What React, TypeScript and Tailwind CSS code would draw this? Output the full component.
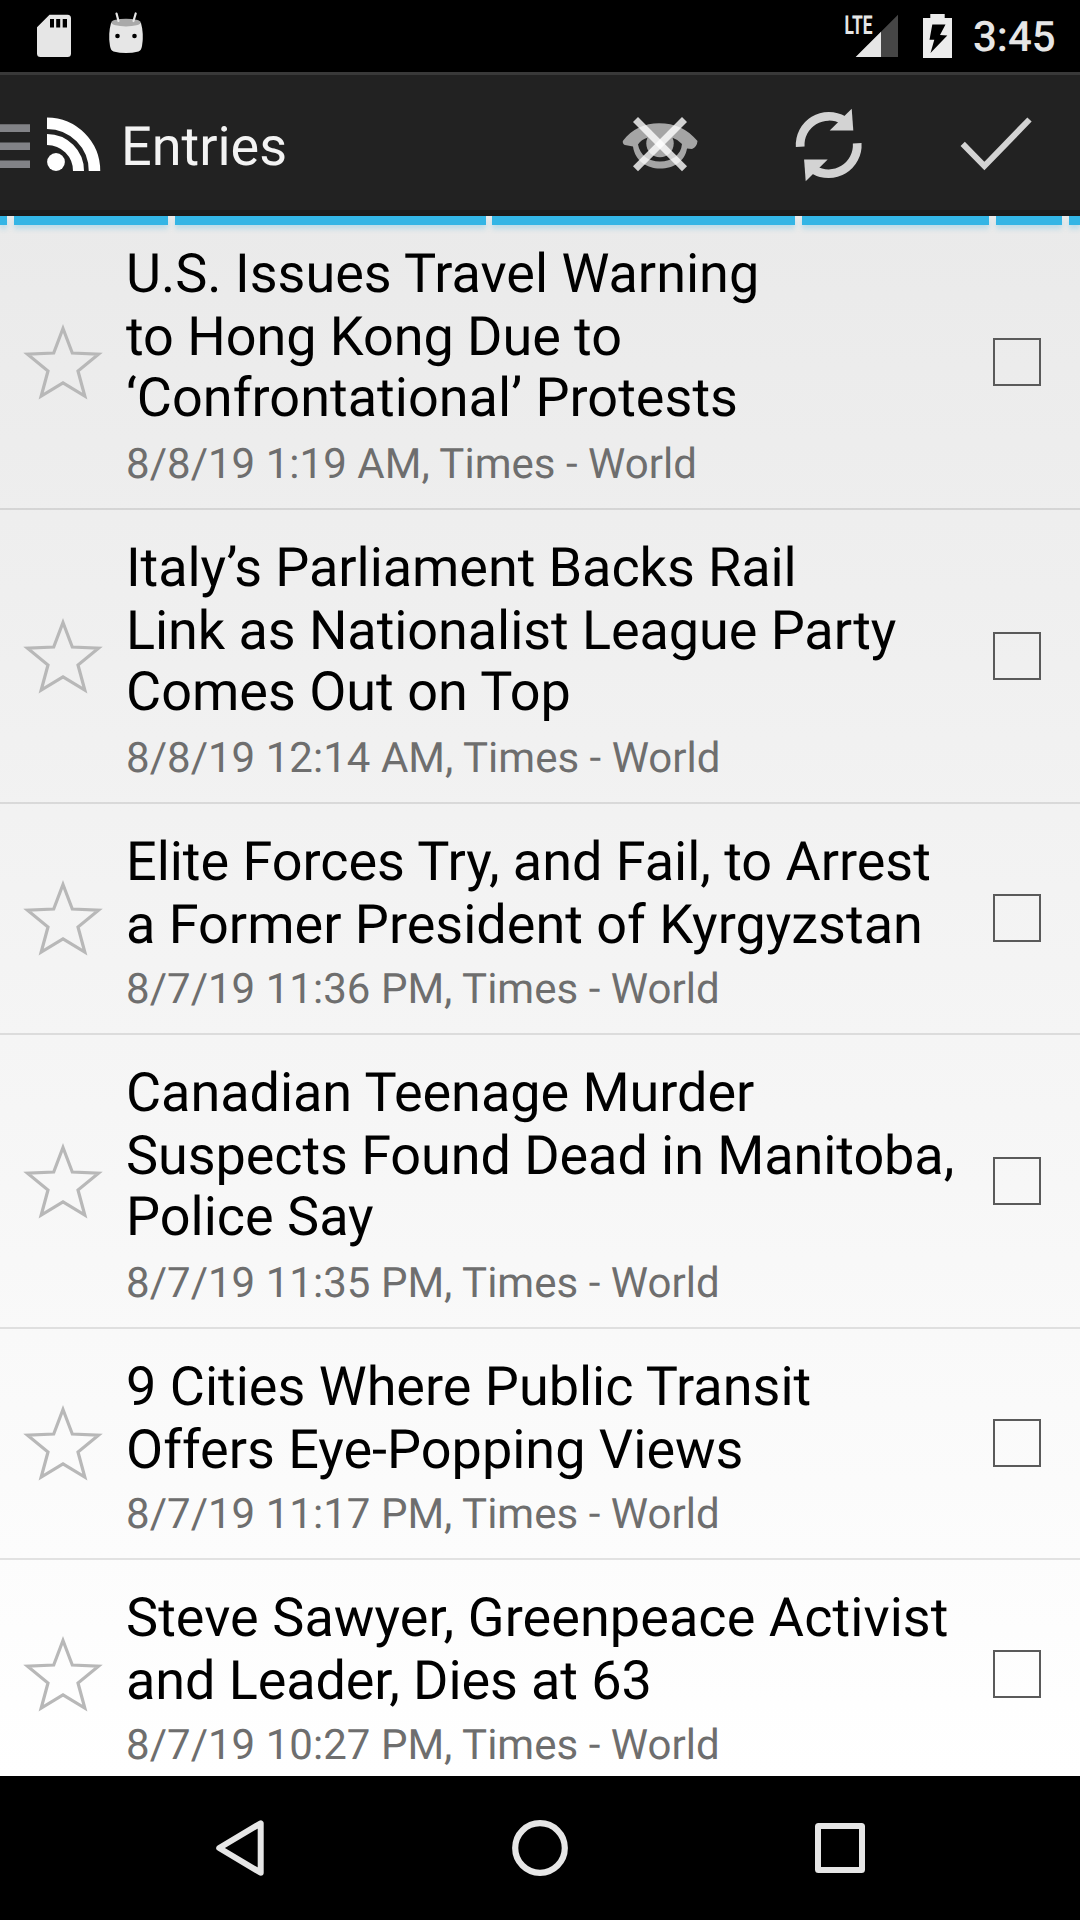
import React from "react";

type Line = { text: string; tracking?: string };
type Entry = { title: Line[]; meta: string };

const entries: Entry[] = [
  {
    title: [
      { text: "U.S. Issues Travel Warning" },
      { text: "to Hong Kong Due to", tracking: "tracking-[-0.05px]" },
      { text: "‘Confrontational’ Protests", tracking: "tracking-[0.03px]" },
    ],
    meta: "8/8/19 1:19 AM, Times - World",
  },
  {
    title: [
      { text: "Italy’s Parliament Backs Rail", tracking: "tracking-[-0.07px]" },
      { text: "Link as Nationalist League Party", tracking: "tracking-[-0.07px]" },
      { text: "Comes Out on Top" },
    ],
    meta: "8/8/19 12:14 AM, Times - World",
  },
  {
    title: [
      { text: "Elite Forces Try, and Fail, to Arrest", tracking: "tracking-[-0.03px]" },
      { text: "a Former President of Kyrgyzstan" },
    ],
    meta: "8/7/19 11:36 PM, Times - World",
  },
  {
    title: [
      { text: "Canadian Teenage Murder", tracking: "tracking-[-0.05px]" },
      { text: "Suspects Found Dead in Manitoba,", tracking: "tracking-[-0.08px]" },
      { text: "Police Say" },
    ],
    meta: "8/7/19 11:35 PM, Times - World",
  },
  {
    title: [{ text: "9 Cities Where Public Transit" }, { text: "Offers Eye-Popping Views" }],
    meta: "8/7/19 11:17 PM, Times - World",
  },
  {
    title: [
      { text: "Steve Sawyer, Greenpeace Activist", tracking: "tracking-[0.07px]" },
      { text: "and Leader, Dies at 63", tracking: "tracking-[-0.1px]" },
    ],
    meta: "8/7/19 10:27 PM, Times - World",
  },
];

function StatusBar() {
  return (
    <div className="flex h-[72px] shrink-0 items-center bg-black pl-[36px] pr-[24px]">
      <svg className="h-[72px] w-[36px]" viewBox="36 0 36 72" fill="#e6e6e6">
        <path
          fillRule="evenodd"
          d="M49.5 14.7H67.500a3.500 3.500 0 0 1 3.500 3.500V53.500a3.500 3.500 0 0 1-3.500 3.500H40.500a3.500 3.500 0 0 1-3.500-3.500V27.200ZM50 19v8.500h4V19ZM56.200 19v8.500h4V19ZM62.700 19v8.500h4.300V19Z"
        />
      </svg>
      <svg className="ml-[36px] h-[72px] w-[36px]" viewBox="108 0 36 72">
        <path
          d="M111 23C109 30 108.600 38 110 46Q110.800 50.500 113.500 51.500Q126 54.500 138.500 51.500Q141.200 50.500 142 46C143.400 38 143 30 141 23Z"
          fill="#e6e6e6"
        />
        <ellipse cx="126" cy="22.600" rx="14.800" ry="3.900" fill="#a9a9a9" />
        <path d="M116.500 13.500L118.500 21M135.700 13.500L133.500 21" stroke="#e6e6e6" strokeWidth="2.200" strokeLinecap="round" />
        <circle cx="117.500" cy="36" r="2.300" />
        <circle cx="134.500" cy="36" r="2.300" />
      </svg>
      <div className="ml-auto flex items-center">
        <svg className="h-[72px] w-[60px]" viewBox="840 0 60 72" fill="#e6e6e6">
          <path d="M855.700 57H898V14.700Z" fill="#464646" />
          <path d="M855.700 57H881V31.700Z" />
          <text
            x="844.500"
            y="33.500"
            textLength="28"
            lengthAdjust="spacingAndGlyphs"
            className="font-['Roboto'] text-[26px] font-bold"
          >
            LTE
          </text>
        </svg>
        <svg className="ml-[20px] h-[72px] w-[36px]" viewBox="920 0 36 72">
          <path d="M930.300 14H944.700V18H952V58H923V18H930.300Z" fill="#ececec" />
          <path d="M932.300 24.500H945.500L940 35L947.300 35.500L930.500 53L934.300 39.700H929.500Z" fill="#000" />
        </svg>
        <span className="ml-[17px] w-[83px] pt-[4px] text-[42px] font-medium leading-[68px] text-[#e6e6e6]">
          3:45
        </span>
      </div>
    </div>
  );
}

function RefreshArrow() {
  return (
    <>
      <path d="M800.200 146.800A28.700 28.700 0 0 1 843.500 120.300" stroke="#d3d3d3" strokeWidth="8.700" />
      <path d="M851.700 108.800L853.300 130.500H829.700Z" fill="#d3d3d3" />
    </>
  );
}

function ActionBar() {
  return (
    <div className="flex h-[144px] shrink-0 items-center border-b-[6px] border-t-[3px] border-b-[#1a1a1a] border-t-[#393939] bg-[#222222]">
      <svg className="h-[135px] w-[121px]" viewBox="0 75 121 135">
        <path d="M0 124.300H30V132H0ZM0 142.400H30V150H0ZM0 160.500H30V168H0Z" fill="#828387" />
        <circle cx="56" cy="162" r="8.900" fill="#fff" />
        <path d="M47 139.500A31.500 31.500 0 0 1 78.500 171" stroke="#fff" strokeWidth="11" fill="none" />
        <path d="M47 123.200A47.700 47.700 0 0 1 94.500 171" stroke="#fff" strokeWidth="11.500" fill="none" />
      </svg>
      <h1 className="pt-[9px] text-[54px] font-normal leading-[63px] text-[#f3f3f3]">Entries</h1>
      <div className="ml-auto flex">
        <button className="flex w-[168px] justify-center">
          <svg className="h-[135px] w-[96px]" viewBox="612 75 96 135">
            <path
              fill="#a5a5a5"
              fillRule="evenodd"
              d="M622.800 141C632 129 645 123.300 659 123.300C675 123.300 687 129 697.500 141Q697 147 692 149L687 148.500C685 161 674 168.500 660 168.500C647 168.500 635 161 633 146.500L625 145Q622.500 144 622.800 141ZM638 144.500Q641 139.500 648 137.500L673 138Q678 139.500 682 144C681 155 672 161.500 660 161.500C648 161.500 640 155 638 144.500Z"
            />
            <circle cx="660" cy="143.500" r="13.700" fill="#a5a5a5" />
            <path d="M635.500 119.500L684.500 168.800" stroke="#fff" strokeOpacity="0.800" strokeWidth="7" />
            <path d="M684.500 119.500L635.500 168.800" stroke="#fff" strokeOpacity="0.800" strokeWidth="7" />
          </svg>
        </button>
        <button className="flex w-[168px] justify-center">
          <svg className="h-[135px] w-[96px]" viewBox="780 75 96 135" fill="none">
            <RefreshArrow />
            <g transform="rotate(180 828.700 145)">
              <RefreshArrow />
            </g>
          </svg>
        </button>
        <button className="flex w-[168px] justify-center">
          <svg className="h-[135px] w-[96px]" viewBox="948 75 96 135">
            <path d="M962.700 143.800L984.400 166L1029.500 119.500" stroke="#d3d3d3" strokeWidth="6" fill="none" />
          </svg>
        </button>
      </div>
    </div>
  );
}

function LoadingStripe() {
  const seg = "h-[9px] bg-[#33b5e5] shadow-[0_4px_5px_rgba(51,181,229,0.25)]";
  return (
    <div className="absolute inset-x-0 top-0 flex h-[9px] justify-between">
      <div className={`${seg} w-[7px]`} />
      <div className={`${seg} w-[154px]`} />
      <div className={`${seg} w-[311px]`} />
      <div className={`${seg} w-[303px]`} />
      <div className={`${seg} w-[187px]`} />
      <div className={`${seg} w-[66px]`} />
      <div className={`${seg} w-[11px]`} />
    </div>
  );
}

function EntryRow({ entry }: { entry: Entry }) {
  const tall = entry.title.length === 3;
  return (
    <li
      className={`flex shrink-0 items-center border-b-2 border-black/10 ${tall ? "h-[294px]" : "h-[231px]"}`}
    >
      <svg className={`h-[90px] w-[126px] shrink-0 ${tall ? "" : "-mt-px"}`} viewBox="0 317 126 90">
        <path
          d="M63 328.500L72.300 353L98.500 354.200L78 371L84.800 396L63 382.800L41.200 396L48 371L27.500 354.200L53.700 353Z"
          fill="none"
          stroke="#b8b8b8"
          strokeWidth="3.200"
          strokeMiterlimit="10"
        />
      </svg>
      <div className="flex h-full grow flex-col whitespace-nowrap pt-[27px]">
        <h2 className="text-[54px] font-normal leading-[63px] text-black">
          {entry.title.map(({ text, tracking = "" }, i) => (
            <span key={text} className={`block ${i === 2 ? "-mt-[2px]" : ""} ${tracking}`}>
              {text}
            </span>
          ))}
        </h2>
        <p
          className={`text-[42px] leading-[49px] tracking-[0.03px] text-[#6e6e6e] ${tall ? "mt-[10px]" : "mt-[8px]"}`}
        >
          {entry.meta}
        </p>
      </div>
      <span
        className={`mr-[39px] h-[48px] w-[48px] shrink-0 border-2 border-[#5a5a5a] ${tall ? "" : "-mt-px"}`}
      />
    </li>
  );
}

function NavBar() {
  return (
    <nav className="flex h-[144px] shrink-0 items-center justify-between bg-black px-[204px]">
      <svg className="h-[72px] w-[72px]" viewBox="204 1812 72 72">
        <path d="M219.200 1848L260.700 1823.300V1872.700Z" fill="none" stroke="#e6e6e6" strokeWidth="6" strokeLinejoin="round" />
      </svg>
      <svg className="h-[72px] w-[72px]" viewBox="504 1812 72 72">
        <circle cx="540" cy="1848" r="24.800" fill="none" stroke="#e6e6e6" strokeWidth="6.200" />
      </svg>
      <svg className="h-[72px] w-[72px]" viewBox="804 1812 72 72">
        <rect x="818" y="1826" width="44" height="44" rx="0.500" fill="none" stroke="#e6e6e6" strokeWidth="6" strokeLinejoin="round" />
      </svg>
    </nav>
  );
}

export default function App() {
  return (
    <div className="flex h-[1920px] w-[1080px] flex-col overflow-hidden bg-black font-['Roboto',sans-serif] [text-rendering:geometricPrecision]">
      <StatusBar />
      <ActionBar />
      <main className="relative h-[1560px] shrink-0 overflow-hidden bg-linear-to-b from-[#eaeaea] to-white">
        <ul className="flex flex-col">
          {entries.map((entry) => (
            <EntryRow key={entry.meta} entry={entry} />
          ))}
        </ul>
        <LoadingStripe />
      </main>
      <NavBar />
    </div>
  );
}
